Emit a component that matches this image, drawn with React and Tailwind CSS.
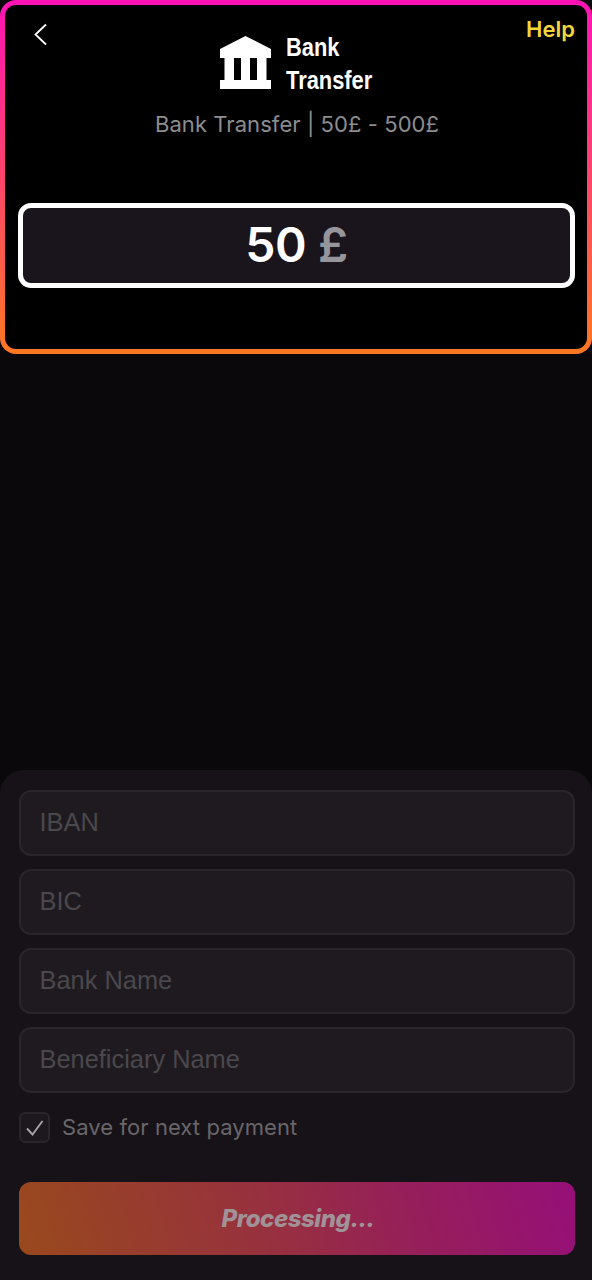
import { useState } from "react";

const fields = [
  { name: "iban", placeholder: "IBAN" },
  { name: "bic", placeholder: "BIC" },
  { name: "bankName", placeholder: "Bank Name" },
  { name: "beneficiaryName", placeholder: "Beneficiary Name" },
];

const BankLogo = () => (
  <div className="flex pt-[25px] h-[90px]">
    <svg width="51" height="53" viewBox="0 0 51 53" className="mt-[6px]">
      <path
        fill="#fff"
        d="M25.5 0 51 13v9h-4.500v22H51v9H0v-9h4.500V22H0v-9L25.500 0ZM14 22v22h7V22h-7Zm16 0v22h7V22h-7Z"
      />
    </svg>
    <div className="mt-px ml-[15px] w-[87px] font-['Liberation_Sans'] text-[26.5px] leading-[33px] font-bold text-white">
      <div className="origin-left scale-x-[0.825]">Bank</div>
      <div className="origin-left scale-x-[0.825]">Transfer</div>
    </div>
  </div>
);

const CheckIcon = () => (
  <svg width="18" height="16" viewBox="0 0 18 16" fill="none">
    <path d="M1 8.500 6.500 14.500 16.500 1" stroke="#a5a3a6" strokeWidth="1.900" />
  </svg>
);

const App = () => {
  const [values, setValues] = useState({});
  const [save, setSave] = useState(true);

  const handleChange = (e) => {
    const { name, value } = e.target;
    setValues((prev) => ({ ...prev, [name]: value }));
  };

  return (
    <div className="flex h-[1280px] w-[592px] flex-col justify-between bg-[#0a080b] font-['Inter',sans-serif]">
      {/* Amount card */}
      <div className="h-[354px] rounded-[16px] bg-[linear-gradient(180deg,#ff12b5,#ff7822)] p-[5px]">
        <div className="flex h-full flex-col rounded-[11px] bg-black px-[13px]">
          <div className="grid grid-cols-[1fr_auto_1fr] items-start">
            <button className="ml-4 mt-[18px] w-fit">
              <svg width="13" height="23" viewBox="0 0 13 23" fill="none">
                <path d="M12 1.500 1.500 11.500 12 21.500" stroke="#fff" strokeWidth="1.800" />
              </svg>
            </button>
            <BankLogo />
            <button className="mt-[10px] -mr-px justify-self-end text-[22px] leading-[28px] font-semibold text-[#f4d63c]">
              Help
            </button>
          </div>
          <p className="mt-[15px] pl-[2px] text-center text-[22px] leading-[28px] tracking-[0.07px] text-[#8d8d8f]">
            Bank Transfer | 50£ - 500£
          </p>
          <div className="mt-[65px] flex h-[85px] w-[557px] shrink-0 items-center justify-center gap-[12px] rounded-[13px] border-5 border-white bg-[#1a151c] pb-[2px] text-[48px] font-semibold tracking-[-0.5px]">
            <span className="text-white">50</span>
            <span className="text-[#96959c]">£</span>
          </div>
        </div>
      </div>

      {/* Bank details */}
      <div className="h-[510px] rounded-t-[24px] bg-[#171217] pt-5 pr-[17px] pl-[19px]">
        <div className="flex flex-col gap-[13px]">
          {fields.map((field) => (
            <input
              key={field.name}
              type="text"
              name={field.name}
              value={values[field.name] || ""}
              onChange={handleChange}
              placeholder={field.placeholder}
              className="h-[66px] w-full rounded-[12px] border-2 border-[#29252b] bg-[#1f1a20] px-[18.5px] pb-[2px] font-['Liberation_Sans'] text-[25.4px] text-[#9b999c] placeholder:text-[#4b484d]"
            />
          ))}
        </div>
        <button
          onClick={() => setSave(!save)}
          className="mt-[19px] flex items-center gap-[12px]"
        >
          <span className="flex size-[31px] items-center justify-center rounded-[6px] border-2 border-[#29252b] bg-[#1c181e]">
            {save && <CheckIcon />}
          </span>
          <span className="pb-px text-[22px] leading-[28px] tracking-[0.07px] text-[#69666b]">
            Save for next payment
          </span>
        </button>
        <button className="mt-[39px] h-[73px] w-full rounded-[12px] bg-[linear-gradient(75deg,#99491d_0%,#97303f_45%,#961f5a_70%,#960f78_100%)] pl-[2px] text-[24px] font-extrabold tracking-[-0.45px] text-[#a09296] italic">
          Processing...
        </button>
      </div>
    </div>
  );
};

export default App;
